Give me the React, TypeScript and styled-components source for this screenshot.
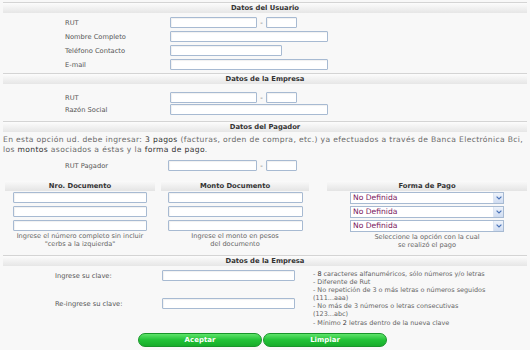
import React from 'react';
import styled, { createGlobalStyle } from 'styled-components';

const GlobalStyle = createGlobalStyle`
  html, body {
    margin: 0;
    padding: 0;
    background: #f8f8f8;
  }
  body {
    font-family: "DejaVu Sans", Verdana, sans-serif;
    color: #555;
  }
  * {
    box-sizing: border-box;
  }
`;

const Page = styled.div`
  width: 530px;
  height: 350px;
  overflow: hidden;
  padding-top: 2px;
  background: #f8f8f8;
`;

const SectionHeader = styled.div<{ $mt?: number }>`
  margin: ${(p) => p.$mt ?? 0}px 3px 0;
  height: 11px;
  line-height: 10px;
  border-top: 1px solid #d4d4d4;
  background: linear-gradient(#fcfcfc, #e6e6e6);
  text-align: center;
  font-size: 6.8px;
  font-weight: bold;
  color: #333;
`;

const FieldList = styled.div<{ $pt: number; $gap: number; $pl?: number }>`
  display: flex;
  flex-direction: column;
  gap: ${(p) => p.$gap}px;
  padding: ${(p) => p.$pt}px 0 0 ${(p) => p.$pl ?? 65}px;
`;

const FieldRow = styled.div`
  display: flex;
  align-items: center;
  height: 11px;
`;

const Label = styled.span<{ $w: number }>`
  width: ${(p) => p.$w}px;
  font-size: 6.7px;
  color: #555;
  white-space: nowrap;
`;

const TextInput = styled.input<{ $w: number }>`
  width: ${(p) => p.$w}px;
  height: 11px;
  padding: 0;
  border: 1px solid #a7bad2;
  border-radius: 1px;
  background: #fff;
  box-shadow: inset 1px 1px 1px rgba(0, 0, 0, 0.06);
`;

const Dash = styled.span`
  width: 9px;
  text-align: center;
  font-size: 7px;
  color: #666;
`;

const Intro = styled.p`
  margin: 3px 0 0 3px;
  font-size: 7.6px;
  letter-spacing: 0.35px;
  line-height: 9.5px;
  color: #6a6a6a;
  white-space: nowrap;
`;

const Strong = styled.span`
  color: #333;
`;

const DocTable = styled.div`
  display: grid;
  grid-template-columns: 150px 148px 1fr;
  column-gap: 6px;
  margin: 10px 3px 0 5px;
`;

const DocColumn = styled.div<{ $indent?: number }>`
  display: flex;
  flex-direction: column;
  align-items: center;
  padding-left: ${(p) => p.$indent ?? 0}px;
`;

const ColumnHead = styled.div`
  align-self: stretch;
  height: 10px;
  line-height: 10px;
  margin-bottom: 1px;
  background: linear-gradient(#fafafa, #e4e4e4);
  text-align: center;
  font-size: 6.8px;
  font-weight: bold;
  color: #333;
`;

const Stack = styled.div<{ $gap: number }>`
  display: flex;
  flex-direction: column;
  gap: ${(p) => p.$gap}px;
`;

const HelpText = styled.div`
  margin-top: 2px;
  font-size: 6.6px;
  line-height: 7.5px;
  color: #666;
  text-align: center;
  white-space: nowrap;
`;

const SelectBox = styled.div`
  display: flex;
  width: 154px;
  height: 12px;
  border: 1px solid #a7bad2;
  background: #fff;
`;

const Select = styled.select`
  flex: 1;
  appearance: none;
  border: none;
  outline: none;
  background: transparent;
  padding: 0 0 0 2px;
  font-family: "DejaVu Sans", Verdana, sans-serif;
  font-size: 7.6px;
  line-height: 10px;
  color: #7a165d;
`;

const ArrowBox = styled.span`
  display: flex;
  align-items: center;
  justify-content: center;
  width: 10px;
  background: linear-gradient(#eef3fb, #cfdcf1);
  border-left: 1px solid #dde6f3;
`;

const PasswordArea = styled.div`
  display: flex;
  padding-top: 4px;
`;

const PasswordFields = styled.div`
  display: flex;
  flex-direction: column;
  gap: 17px;
  padding-left: 55px;
`;

const Rules = styled.div`
  margin-left: 18px;
  font-size: 6.45px;
  line-height: 8.1px;
  color: #666;
  white-space: nowrap;
`;

const ButtonRow = styled.div`
  display: flex;
  justify-content: center;
  gap: 1px;
  margin-top: 6px;
  padding-right: 5px;
`;

const GreenButton = styled.button`
  width: 124px;
  height: 14px;
  padding: 0;
  border: 1px solid #19952a;
  border-radius: 7px;
  background: linear-gradient(#5ee46a, #22c237 50%, #17ad2b);
  color: #fff;
  font-family: "DejaVu Sans", Verdana, sans-serif;
  font-size: 7px;
  font-weight: bold;
  line-height: 12px;
`;

const Chevron = () => (
  <svg width="6" height="4" viewBox="0 0 6 4">
    <path d="M0.6 0.6 L3 3 L5.4 0.6" fill="none" stroke="#4a73b8" strokeWidth="1.2" />
  </svg>
);

const FormaPago = () => (
  <SelectBox>
    <Select defaultValue="nd">
      <option value="nd">No Definida</option>
    </Select>
    <ArrowBox>
      <Chevron />
    </ArrowBox>
  </SelectBox>
);

const rows = [0, 1, 2];

const App: React.FC = () => {
  return (
    <Page>
      <GlobalStyle />
      <SectionHeader>Datos del Usuario</SectionHeader>
      <FieldList $pt={4} $gap={3}>
        <FieldRow>
          <Label $w={105}>RUT</Label>
          <TextInput $w={87} />
          <Dash>-</Dash>
          <TextInput $w={31} />
        </FieldRow>
        <FieldRow>
          <Label $w={105}>Nombre Completo</Label>
          <TextInput $w={158} />
        </FieldRow>
        <FieldRow>
          <Label $w={105}>Teléfono Contacto</Label>
          <TextInput $w={112} />
        </FieldRow>
        <FieldRow>
          <Label $w={105}>E-mail</Label>
          <TextInput $w={158} />
        </FieldRow>
      </FieldList>

      <SectionHeader $mt={3}>Datos de la Empresa</SectionHeader>
      <FieldList $pt={8} $gap={1}>
        <FieldRow>
          <Label $w={105}>RUT</Label>
          <TextInput $w={87} />
          <Dash>-</Dash>
          <TextInput $w={31} />
        </FieldRow>
        <FieldRow>
          <Label $w={105}>Razón Social</Label>
          <TextInput $w={158} />
        </FieldRow>
      </FieldList>

      <SectionHeader $mt={6}>Datos del Pagador</SectionHeader>
      <Intro>
        En esta opción ud. debe ingresar: <Strong>3 pagos</Strong> (facturas, orden de compra, etc.) ya efectuados a través de Banca Electrónica Bci,
        <br />
        los <Strong>montos</Strong> asociados a éstas y la <Strong>forma de pago</Strong>.
      </Intro>
      <FieldList $pt={6} $gap={0}>
        <FieldRow>
          <Label $w={103}>RUT Pagador</Label>
          <TextInput $w={89} />
          <Dash>-</Dash>
          <TextInput $w={31} />
        </FieldRow>
      </FieldList>

      <DocTable>
        <DocColumn>
          <ColumnHead>Nro. Documento</ColumnHead>
          <Stack $gap={3}>
            {rows.map((r) => (
              <TextInput key={r} $w={134} />
            ))}
          </Stack>
          <HelpText>
            Ingrese el número completo sin incluir
            <br />
            "cerbs a la izquierda"
          </HelpText>
        </DocColumn>
        <DocColumn>
          <ColumnHead>Monto Documento</ColumnHead>
          <Stack $gap={3}>
            {rows.map((r) => (
              <TextInput key={r} $w={135} />
            ))}
          </Stack>
          <HelpText>
            Ingrese el monto en pesos
            <br />
            del documento
          </HelpText>
        </DocColumn>
        <DocColumn $indent={12}>
          <ColumnHead>Forma de Pago</ColumnHead>
          <Stack $gap={2}>
            {rows.map((r) => (
              <FormaPago key={r} />
            ))}
          </Stack>
          <HelpText>
            Seleccione la opción con la cual
            <br />
            se realizó el pago
          </HelpText>
        </DocColumn>
      </DocTable>

      <SectionHeader $mt={6}>Datos de la Empresa</SectionHeader>
      <PasswordArea>
        <PasswordFields>
          <FieldRow>
            <Label $w={107}>Ingrese su clave:</Label>
            <TextInput type="password" $w={133} />
          </FieldRow>
          <FieldRow>
            <Label $w={107}>Re-ingrese su clave:</Label>
            <TextInput type="password" $w={133} />
          </FieldRow>
        </PasswordFields>
        <Rules>
          - <Strong>8</Strong> caracteres alfanuméricos, sólo números y/o letras
          <br />
          - Diferente de Rut
          <br />
          - No repetición de 3 o más letras o números seguidos
          <br />
          (111...aaa)
          <br />
          - No más de 3 números o letras consecutivas
          <br />
          (123...abc)
          <br />
          - Mínimo <Strong>2</Strong> letras dentro de la nueva clave
        </Rules>
      </PasswordArea>
      <ButtonRow>
        <GreenButton type="button">Aceptar</GreenButton>
        <GreenButton type="button">Limpiar</GreenButton>
      </ButtonRow>
    </Page>
  );
};

export default App;
